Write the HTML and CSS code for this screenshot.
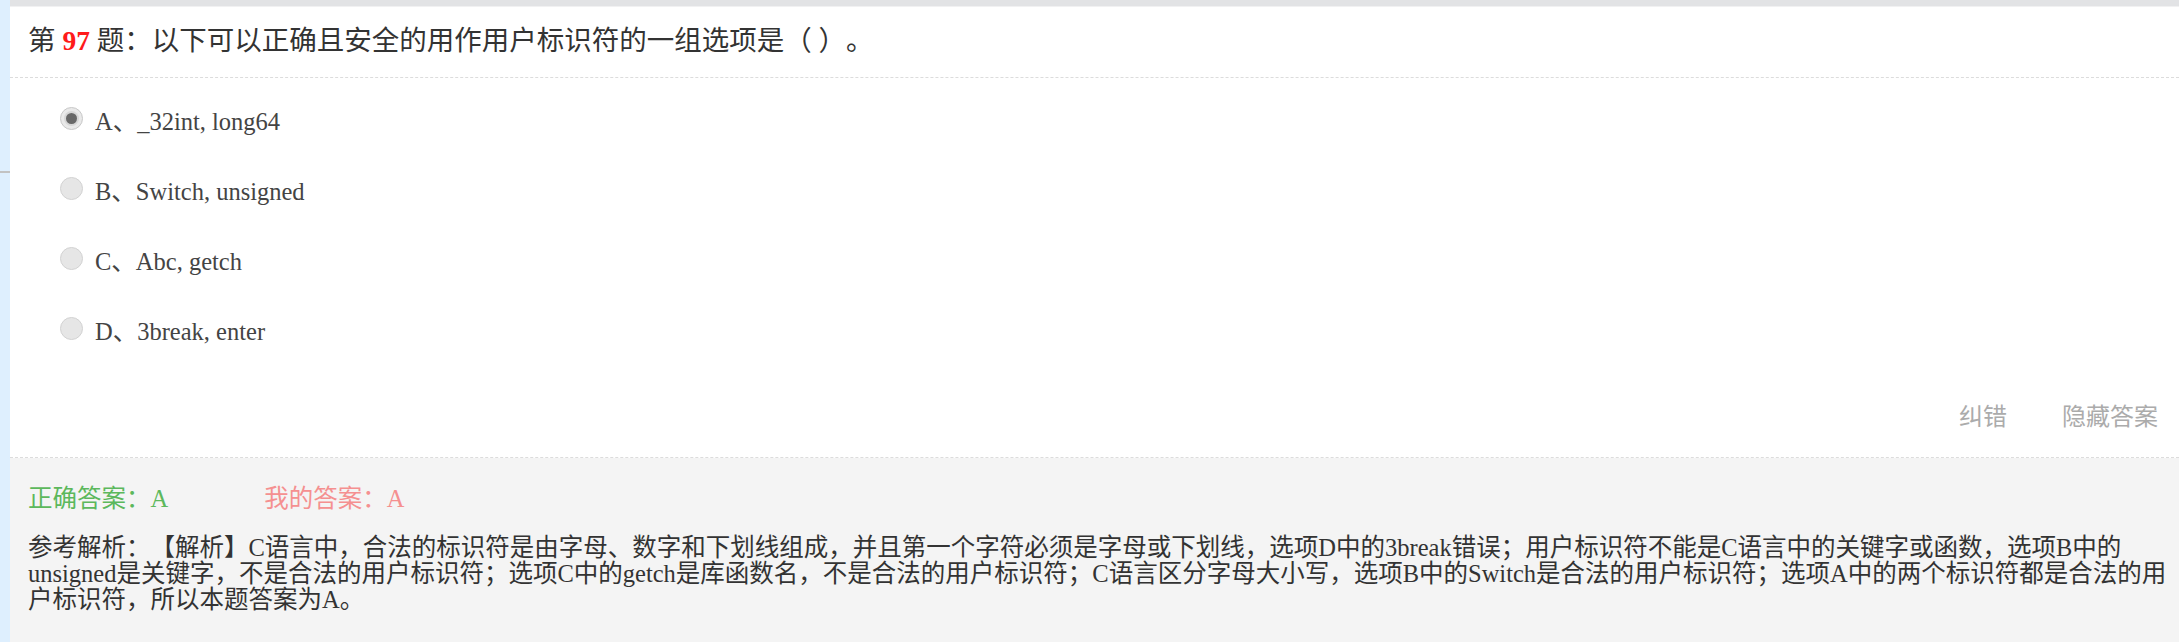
FILE: index.html
```html
<!DOCTYPE html>
<html lang="zh-CN">
<head>
<meta charset="utf-8">
<title>第 97 题</title>
<link rel="stylesheet" href="styles.css">
</head>
<body>
<div class="page">
  <aside class="rail"><span class="rail-mark"></span></aside>
  <main class="main">
    <div class="topbar"></div>
    <section class="question">
      <h2 class="q-title">第 <b class="q-num">97</b> 题：以下可以正确且安全的用作用户标识符的一组选项是（ ）。</h2>
      <ul class="options">
        <li class="option"><span class="radio checked"></span><span class="opt-text">A、_32int, long64</span></li>
        <li class="option"><span class="radio"></span><span class="opt-text">B、Switch, unsigned</span></li>
        <li class="option"><span class="radio"></span><span class="opt-text">C、Abc, getch</span></li>
        <li class="option"><span class="radio"></span><span class="opt-text">D、3break, enter</span></li>
      </ul>
      <div class="actions">
        <a class="action">纠错</a>
        <a class="action">隐藏答案</a>
      </div>
    </section>
    <section class="answer">
      <div class="answer-row">
        <span class="correct">正确答案：A</span>
        <span class="mine">我的答案：A</span>
      </div>
      <p class="analysis">参考解析：【解析】C语言中，合法的标识符是由字母、数字和下划线组成，并且第一个字符必须是字母或下划线，选项D中的3break错误；用户标识符不能是C语言中的关键字或函数，选项B中的unsigned是关键字，不是合法的用户标识符；选项C中的getch是库函数名，不是合法的用户标识符；C语言区分字母大小写，选项B中的Switch是合法的用户标识符；选项A中的两个标识符都是合法的用户标识符，所以本题答案为A。</p>
    </section>
  </main>
</div>
</body>
</html>
```

FILE: styles.css
```css
* {
  box-sizing: border-box;
}

html, body {
  margin: 0;
  padding: 0;
  background: #ffffff;
}

body {
  font-family: "Liberation Serif", "Noto Sans CJK SC", serif;
  color: #333333;
  overflow: hidden;
  text-spacing-trim: space-all;
}

.page {
  display: flex;
  min-height: 100vh;
}

.rail {
  width: 10px;
  flex: 0 0 10px;
  background: #deeffe;
  padding-top: 171px;
}

.rail-mark {
  display: block;
  height: 2px;
  background: #c2c2c2;
}

.main {
  flex: 1;
  display: flex;
  flex-direction: column;
  min-width: 0;
}

.topbar {
  height: 7px;
  background: #e2e3e5;
  border-bottom: 1px solid #f1f1f2;
}

.question {
  background: #ffffff;
}

.q-title {
  margin: 0;
  padding: 16px 0 18px 18px;
  font-size: 27.5px;
  line-height: 36px;
  font-weight: normal;
  color: #333333;
  border-bottom: 1px dashed #dcdcdc;
}

.q-num {
  color: #ff1a1a;
  font-weight: bold;
}

.options {
  list-style: none;
  margin: 0;
  padding: 5px 0 0 50px;
}

.option {
  height: 70px;
  display: flex;
  align-items: center;
  gap: 12px;
}

.radio {
  width: 23px;
  height: 23px;
  border-radius: 50%;
  background: #e6e6e6;
  border: 1px solid #d2d2d2;
  display: flex;
  align-items: center;
  justify-content: center;
  margin-top: 1px;
}

.radio.checked {
  background: #e9e9e9;
  border-color: #c8c8c8;
}

.radio.checked::after {
  content: "";
  width: 11px;
  height: 11px;
  border-radius: 50%;
  background: #686868;
  box-shadow: 0 0 0 2px #d6d6d6;
}

.opt-text {
  font-size: 24.5px;
  line-height: 30px;
  color: #444444;
  padding-top: 7px;
}

.actions {
  display: flex;
  justify-content: flex-end;
  gap: 55px;
  padding: 34px 21px 24px 0;
  border-bottom: 1px dashed #dcdcdc;
}

.action {
  font-family: "Noto Sans CJK SC", sans-serif;
  font-size: 24px;
  line-height: 36px;
  color: #ababab;
  cursor: pointer;
}

.answer {
  flex: 1;
  background: #f4f4f4;
  padding: 23px 9px 0 18px;
}

.answer-row {
  display: flex;
  gap: 96px;
  font-size: 24.5px;
  line-height: 36px;
}

.correct {
  color: #5cb85c;
}

.mine {
  color: #f59090;
}

.analysis {
  margin: 18px 0 0;
  font-size: 24.5px;
  line-height: 26px;
  color: #333333;
}
```
